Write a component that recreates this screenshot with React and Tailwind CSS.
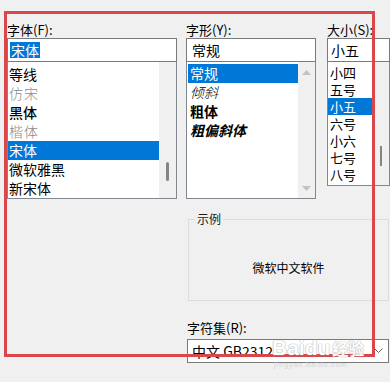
import React from 'react';

const fontItems = [
  { name: '等线', cls: 'text-black' },
  { name: '仿宋', cls: 'text-[#8a8a8a] font-light tracking-[1px]' },
  { name: '黑体', cls: 'text-black font-medium' },
  { name: '楷体', cls: 'text-[#8a8a8a] font-light tracking-[1px]' },
  { name: '宋体', cls: 'text-white', selected: true },
  { name: '微软雅黑', cls: 'text-black' },
  { name: '新宋体', cls: 'text-black' },
];

const styleItems = [
  { name: '常规', cls: 'text-white', selected: true },
  { name: '倾斜', cls: 'italic font-light' },
  { name: '粗体', cls: 'font-bold' },
  { name: '粗偏斜体', cls: 'italic font-bold' },
];

const sizeItems = ['小四', '五号', '小五', '六号', '小六', '七号', '八号'];

const Label = ({ children }) => (
  <div className="h-[17px] text-[13px] leading-[17px] text-black whitespace-nowrap">{children}</div>
);

const UpArrow = () => (
  <svg width="9" height="5" viewBox="0 0 9 5">
    <path d="M0 5 L4.5 0 L9 5 Z" fill="#c2c2c2" />
  </svg>
);

const DownArrow = () => (
  <svg width="9" height="5" viewBox="0 0 9 5">
    <path d="M0 0 L4.5 5 L9 0 Z" fill="#c2c2c2" />
  </svg>
);

export default function App() {
  return (
    <div className="relative w-[390px] h-[382px] overflow-hidden bg-[#f0f0f0] font-['Noto_Sans_CJK_SC','Noto_Sans',sans-serif] text-black">
      <div className="flex pt-[21px] pl-[7px]">
        {/* 字体 */}
        <div className="w-[170px] shrink-0">
          <Label>字体(F):</Label>
          <div className="h-[24px] border border-[#7a7a7a] bg-white pl-[2px] flex items-center">
            <span className="bg-[#0078d7] text-white text-[14px] leading-[16px] px-px">宋体</span>
          </div>
          <div className="h-[137px] border-x border-b border-[#828790] bg-white flex">
            <div className="flex-1 pt-[3px]">
              {fontItems.map((f) => (
                <div
                  key={f.name}
                  className={`h-[19px] text-[14px] leading-[19px] pl-[1px] ${f.selected ? 'bg-[#0078d7]' : ''} ${f.cls}`}
                >
                  {f.name}
                </div>
              ))}
            </div>
            <div className="w-[17px] bg-[#f0f0f0] pt-[100px] flex justify-center">
              <div className="w-[3px] h-[19px] bg-[#858585] rounded-full" />
            </div>
          </div>
        </div>

        {/* 字形 */}
        <div className="w-[130px] shrink-0 ml-[9px]">
          <Label>字形(Y):</Label>
          <div className="h-[24px] border border-[#7a7a7a] bg-white pl-[5px] text-[14px] leading-[22px]">常规</div>
          <div className="h-[137px] border-x border-b border-[#828790] bg-white flex">
            <div className="flex-1 pt-[2px] pl-px">
              {styleItems.map((s) => (
                <div
                  key={s.name}
                  className={`h-[19px] text-[14px] leading-[19px] pl-[2px] ${s.selected ? 'bg-[#0078d7]' : ''} ${s.cls}`}
                >
                  {s.name}
                </div>
              ))}
            </div>
            <div className="w-[17px] bg-[#f0f0f0] flex flex-col items-center justify-between pt-[8px] pb-[7px]">
              <UpArrow />
              <DownArrow />
            </div>
          </div>
        </div>

        {/* 大小 */}
        <div className="w-[63px] shrink-0 ml-[11px]">
          <Label>大小(S):</Label>
          <div className="h-[24px] border border-[#7a7a7a] bg-white pl-[3px] text-[14px] leading-[22px]">小五</div>
          <div className="h-[124px] border-x border-b border-[#828790] bg-white flex">
            <div className="flex-1 pt-[2px]">
              {sizeItems.map((s) => (
                <div
                  key={s}
                  className={`h-[17px] text-[13px] leading-[17px] pl-[2px] ${s === '小五' ? 'bg-[#0078d7] text-white' : 'text-black'}`}
                >
                  {s}
                </div>
              ))}
            </div>
            <div className="w-[17px] bg-[#f0f0f0] pt-[84px] flex justify-center">
              <div className="w-[2px] h-[20px] bg-[#858585]" />
            </div>
          </div>
        </div>
      </div>

      {/* 示例 + 字符集 */}
      <div className="ml-[188px] w-[201px] mt-[12px]">
        <fieldset className="h-[90px] border border-[#dcdcdc] px-0 m-0 min-w-0">
          <legend className="ml-[6px] px-[2px] text-[12px] leading-[16px] text-[#1a1a1a]">示例</legend>
          <div className="h-[73px] flex items-center justify-center pt-[9px] text-[12px] leading-[16px]">
            微软中文软件
          </div>
        </fieldset>
        <div className="mt-[18px] -ml-px">
          <Label>字符集(R):</Label>
        </div>
        <div className="-ml-px mt-[3px] h-[24px] border border-[#7a7a7a] bg-white flex items-center justify-between pl-[4px] pr-[5px]">
          <span className="text-[14px] leading-[18px]">中文 GB2312</span>
          <svg width="9" height="6" viewBox="0 0 9 6">
            <path d="M0.5 0.5 L4.5 4.5 L8.5 0.5" fill="none" stroke="#606060" strokeWidth="1" />
          </svg>
        </div>
      </div>

      {/* red annotation frame */}
      <div className="absolute left-[4px] top-[11px] w-[371px] h-[346px] border-[3px] border-[#d9474b] pointer-events-none" />

      {/* watermark */}
      <div className="absolute left-[272px] top-[337px] flex flex-col items-start pointer-events-none whitespace-nowrap">
        <div className="flex items-center h-[22px]">
          <span className="font-['Liberation_Sans',sans-serif] font-bold text-[21px] leading-[22px] text-white [text-shadow:0_0_1px_#a8a8a8,0_0_1px_#a8a8a8]">
            Baidu
          </span>
          <span className="ml-[2px] font-bold text-[16px] leading-[22px] text-white [text-shadow:0_0_1px_#a8a8a8,0_0_1px_#a8a8a8]">
            经验
          </span>
        </div>
        <div className="mt-[2px] ml-[2px] text-[7px] leading-[8px] text-[#d4d4d4] font-['Liberation_Sans',sans-serif] tracking-[1px]">
          jingyan.baidu.com
        </div>
      </div>
    </div>
  );
}
